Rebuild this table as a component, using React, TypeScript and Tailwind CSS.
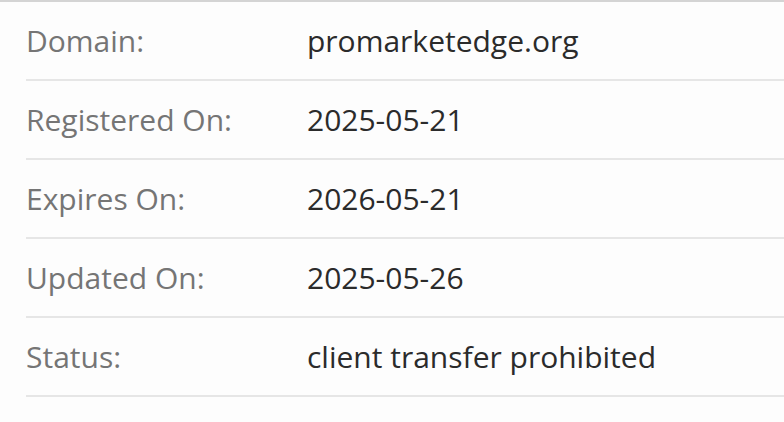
const rows = [
  { label: "Domain:", value: "promarketedge.org" },
  { label: "Registered On:", value: "2025-05-21" },
  { label: "Expires On:", value: "2026-05-21" },
  { label: "Updated On:", value: "2025-05-26" },
  { label: "Status:", value: "client transfer prohibited" },
];

export default function App() {
  return (
    <div className="w-[784px] h-[422px] overflow-hidden bg-[#fdfdfd] border-t-2 border-[#d4d4d4] font-['Open_Sans',sans-serif]">
      <div className="ml-[26px]">
        {rows.map((r) => (
          <div key={r.label} className="flex items-center h-[79px] border-b-2 border-[#e6e6e6]">
            <div className="w-[281px] text-[30px] text-[#757575]">{r.label}</div>
            <div className="text-[30px] text-[#2b2b2b]">{r.value}</div>
          </div>
        ))}
      </div>
    </div>
  );
}
